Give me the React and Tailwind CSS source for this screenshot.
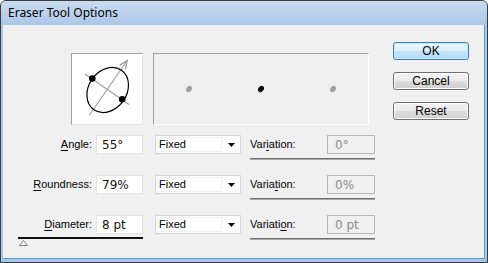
import React from "react";

const Mn = ({ children }) => (
  <span className="underline underline-offset-[2px] decoration-[1px]">{children}</span>
);

const Button = ({ children, primary }) => (
  <button
    className={
      primary
        ? "w-[76px] h-[18px] rounded-[3px] border border-[#3c7fb1] bg-[linear-gradient(to_bottom,#ecf7fd_0%,#dcf0fb_50%,#c2e4f8_50%,#b4dcf5_100%)] text-[12px] leading-none text-black shadow-[inset_0_0_0_1px_#c7e8fb]"
        : "w-[76px] h-[18px] rounded-[3px] border border-[#707070] bg-[linear-gradient(to_bottom,#f2f2f2_0%,#ebebeb_50%,#dddddd_50%,#cfcfcf_100%)] text-[12px] leading-none text-black shadow-[inset_0_0_0_1px_#fcfcfc]"
    }
  >
    {children}
  </button>
);

const Row = ({ label, value, variationLabel, variation, slider }) => (
  <div className="flex flex-col h-[40px]">
    <div className="flex items-center h-[19px]">
      <span className="w-[74px] text-right text-[11px] text-black">{label}</span>
      <div className="ml-[4px] w-[47px] h-[19px] bg-white border border-[#e3e3e3] flex items-center pl-[5px] font-['DejaVu_Sans',sans-serif] text-[12px] text-[#1a1208]">
        {value}
      </div>
      <div className="ml-[12px] w-[86px] h-[19px] bg-white border border-[#d5d5d5] flex">
        <div className="flex-1 m-[1px] border border-[#f0f0f0] flex items-center pl-[1px] text-[11px] text-black">
          Fixed
        </div>
        <div className="w-[17px] flex items-center justify-center">
          <svg width="7" height="4" viewBox="0 0 7 4">
            <polygon points="0,0 7,0 3.5,4" fill="#000" />
          </svg>
        </div>
      </div>
      <span className="ml-[9px] w-[77px] text-[11px] text-black">{variationLabel}</span>
      <div className="w-[48px] h-[19px] bg-[#f0f0f0] border border-[#b5b5b5] flex items-center pl-[7px] font-['DejaVu_Sans',sans-serif] text-[12px] text-[#8a8a8a]">
        {variation}
      </div>
    </div>
    <div className="flex items-start mt-[3px]">
      <div className="w-[125px] flex flex-col">
        <div className={slider ? "h-[2px] bg-[#111]" : "h-[2px]"} />
        {slider && (
          <svg className="ml-[1px] mt-[1px]" width="10" height="6" viewBox="0 0 10 6">
            <polygon points="0.5,5.5 4.5,0.5 8.5,5.5" fill="#fff" stroke="#7a7a7a" />
          </svg>
        )}
      </div>
      <div className="ml-[107px] w-[125px] mt-[1px] flex flex-col">
        <div className="h-[1px] bg-[#6d6d6d]" />
        <div className="h-[1px] bg-[#a8a8a8]" />
      </div>
    </div>
  </div>
);

const BrushShape = () => (
  <svg width="71" height="71" viewBox="0 0 71 71">
    <defs>
      <marker id="head" markerWidth="8" markerHeight="8" refX="6" refY="4" orient="auto">
        <path d="M0,1 L7,4 L0,7" fill="none" stroke="#a0a0a0" strokeWidth="1.2" />
      </marker>
    </defs>
    <line x1="13" y1="20" x2="57" y2="50.5" stroke="#a0a0a0" strokeWidth="1.2" />
    <line x1="17.5" y1="61" x2="54.5" y2="7.5" stroke="#a0a0a0" strokeWidth="1.2" markerEnd="url(#head)" />
    <ellipse cx="35.7" cy="36" rx="19" ry="24" transform="rotate(35 35.7 36)" fill="none" stroke="#000" strokeWidth="1.2" />
    <circle cx="20.3" cy="24.5" r="3.3" fill="#000" />
    <circle cx="50.2" cy="45.3" r="3.3" fill="#000" />
  </svg>
);

const Dot = ({ color }) => (
  <svg width="10" height="10" viewBox="0 0 10 10">
    <ellipse cx="5" cy="5" rx="2.6" ry="3.4" transform="rotate(35 5 5)" fill={color} />
  </svg>
);

export default function App() {
  return (
    <div className="w-[488px] h-[263px] flex flex-col bg-[#9fc0e6] border border-[#3b3b3b] rounded-t-[6px] overflow-hidden font-['Liberation_Sans',Arial,sans-serif]">
      <div className="h-[24px] shrink-0 flex items-center pl-[7px] pb-[1px] bg-[linear-gradient(to_bottom,#c9dbf0_0%,#bcd2ec_50%,#aac6e8_100%)] font-['Noto_Sans',sans-serif] text-[12px] text-black">
        Eraser Tool Options
      </div>
      <div className="flex-1 flex px-[2px] pb-[3px] bg-[#a9c6e8]">
        <div className="flex-1 flex bg-[#f0f0f0] border-r border-b border-[#4aa0d8]">
          <div className="flex flex-col pl-[15px] pt-[28px]">
            <div className="flex pl-[53px] gap-[10px]">
              <div className="w-[72px] h-[72px] bg-white border-t border-l border-[#a0a0a0] border-r border-b border-r-[#e3e3e3] border-b-[#e3e3e3]">
                <BrushShape />
              </div>
              <div className="w-[216px] h-[72px] bg-[#f0f0f0] border-t border-l border-[#a0a0a0] border-r border-b border-r-[#ffffff] border-b-[#ffffff] flex items-center pl-[30px] gap-[62px]">
                <Dot color="#a0a0a0" />
                <Dot color="#000" />
                <Dot color="#a0a0a0" />
              </div>
            </div>
            <div className="mt-[10px] flex flex-col">
              <Row
                label={<><Mn>A</Mn>ngle:</>}
                value="55°"
                variationLabel={<>Var<Mn>i</Mn>ation:</>}
                variation="0°"
              />
              <Row
                label={<><Mn>R</Mn>oundness:</>}
                value="79%"
                variationLabel={<>Varia<Mn>t</Mn>ion:</>}
                variation="0%"
              />
              <Row
                label={<><Mn>D</Mn>iameter:</>}
                value="8 pt"
                variationLabel={<>Variati<Mn>o</Mn>n:</>}
                variation="0 pt"
                slider
              />
            </div>
          </div>
          <div className="ml-auto mr-[15px] pt-[17px] flex flex-col gap-[12px]">
            <Button primary>OK</Button>
            <Button>Cancel</Button>
            <Button>Reset</Button>
          </div>
        </div>
      </div>
    </div>
  );
}
